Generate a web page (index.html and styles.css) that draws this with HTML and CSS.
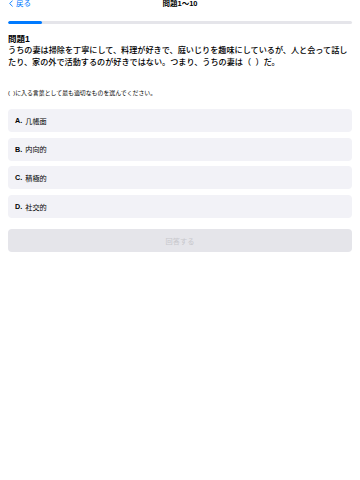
FILE: index.html
```html
<!DOCTYPE html>
<html lang="ja">
<head>
    <meta charset="UTF-8">
    <meta name="viewport" content="width=device-width, initial-scale=1.0">
    <title>問題1〜10</title>
    <link rel="stylesheet" href="styles.css">
</head>
<body>
    <!-- ヘッダー -->
    <header class="topbar">
        <a class="back" href="#">
            <svg class="chevron" viewBox="0 0 6 10" width="4" height="7">
                <path d="M5 1 L1 5 L5 9" fill="none" stroke="#007aff" stroke-width="1.4" stroke-linecap="round" stroke-linejoin="round"/>
            </svg>
            戻る
        </a>
        <div class="title">問題1〜10</div>
        <div></div>
    </header>

    <!-- 進捗バー -->
    <div class="progress">
        <div class="progress-fill" style="width: 10%"></div>
    </div>

    <main class="content">
        <h2 class="q-title">問題1</h2>
        <p class="q-text">うちの妻は掃除を丁寧にして、料理が好きで、庭いじりを趣味にしているが、人と会って話したり、家の外で活動するのが好きではない。つまり、うちの妻は（&nbsp;&nbsp;）だ。</p>

        <p class="instruction">( &nbsp;)に入る言葉として最も適切なものを選んでください。</p>

        <div class="options">
            <div class="option"><b>A.</b> 几帳面</div>
            <div class="option"><b>B.</b> 内向的</div>
            <div class="option"><b>C.</b> 積極的</div>
            <div class="option"><b>D.</b> 社交的</div>
        </div>

        <button class="submit" type="button" disabled>回答する</button>
    </main>
</body>
</html>
```

FILE: styles.css
```css
/* 全体 */
body {
    margin: 0;
    font-family: "Liberation Sans", "Noto Sans CJK JP", sans-serif;
    color: #000;
    background: #fff;
}

/* ヘッダー */
.topbar {
    display: grid;
    grid-template-columns: 1fr auto 1fr;
    align-items: center;
    height: 7px;
    padding: 0 8px;
    font-size: 7.5px;
    line-height: 7px;
}

.back {
    display: flex;
    align-items: center;
    gap: 3px;
    color: #007aff;
    text-decoration: none;
    padding-left: 1px;
}

.title {
    font-weight: bold;
}

/* 進捗バー */
.progress {
    margin: 14px 8px 0;
    height: 3px;
    border-radius: 2px;
    background: #e5e5ea;
    overflow: hidden;
}

.progress-fill {
    height: 100%;
    border-radius: 2px;
    background: #007aff;
}

/* 問題 */
.content {
    padding: 10px 8px 0;
}

.q-title {
    margin: 0;
    font-size: 8.5px;
    line-height: 11px;
    font-weight: bold;
}

.q-text {
    margin: 0;
    font-size: 8.15px;
    line-height: 12px;
    font-weight: 500;
}

.instruction {
    margin: 20px 0 0;
    font-size: 5.9px;
    line-height: 8px;
}

/* 選択肢 */
.options {
    display: flex;
    flex-direction: column;
    gap: 5.7px;
    margin-top: 12px;
}

.option {
    display: flex;
    align-items: center;
    gap: 3px;
    height: 23px;
    padding: 0 7px;
    border-radius: 4px;
    background: #f2f2f7;
    font-size: 7.2px;
}

/* 回答ボタン */
.submit {
    display: block;
    width: 100%;
    height: 23px;
    margin-top: 11px;
    border: none;
    border-radius: 4px;
    background: #e5e5ea;
    color: #c7c7cc;
    font-family: inherit;
    font-size: 7.2px;
}
```
